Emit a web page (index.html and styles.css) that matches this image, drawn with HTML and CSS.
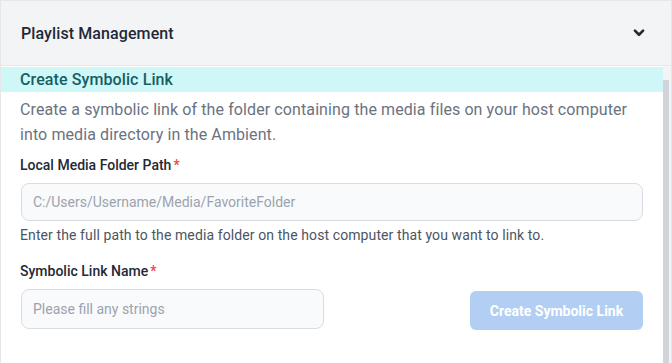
FILE: index.html
```html
<!DOCTYPE html>
<html lang="en">
<head>
    <meta charset="UTF-8">
    <meta name="viewport" content="width=device-width, initial-scale=1.0">
    <title>Playlist Management</title>
    <link rel="stylesheet" href="styles.css">
</head>
<body>

<div class="panel">
    <div class="panel-header">
        <span class="panel-title">Playlist Management</span>
        <svg class="chevron" width="14" height="14" viewBox="0 0 24 24" fill="none" stroke="currentColor" stroke-width="4.5" stroke-linecap="round" stroke-linejoin="round">
            <path d="M5 8l7 7 7-7"/>
        </svg>
    </div>

    <div class="panel-body">
        <div class="panel-content">
            <div class="section-title">Create Symbolic Link</div>
            <div class="section-content">
                <p class="description">Create a symbolic link of the folder containing the media files on your host computer into media directory in the Ambient.</p>

                <div class="field">
                    <label class="field-label">Local Media Folder Path<span class="required">*</span></label>
                    <input class="text-input" type="text" placeholder="C:/Users/Username/Media/FavoriteFolder">
                    <div class="field-help">Enter the full path to the media folder on the host computer that you want to link to.</div>
                </div>

                <div class="field">
                    <label class="field-label">Symbolic Link Name<span class="required">*</span></label>
                    <div class="field-row">
                        <input class="text-input short" type="text" placeholder="Please fill any strings">
                        <button class="btn-create" disabled>Create Symbolic Link</button>
                    </div>
                </div>
            </div>
        </div>
        <!-- scrollbar of the panel body -->
        <div class="scroll-track">
            <div class="scroll-thumb"></div>
        </div>
    </div>
</div>

</body>
</html>
```

FILE: styles.css
```css
body {
    font-family: Roboto, "Liberation Sans", sans-serif;
    background-color: #fff;
    margin: 0;
    padding: 0;
}

.panel {
    height: 363px;
    border: 1px solid #e5e7eb;
    border-bottom: none;
    box-sizing: border-box;
    display: flex;
    flex-direction: column;
}

.panel-header {
    height: 64px;
    flex-shrink: 0;
    display: flex;
    align-items: center;
    justify-content: space-between;
    padding: 0 20px;
    background-color: #f3f4f6;
    border-bottom: 1px solid #e5e7eb;
}

.panel-title {
    font-size: 16px;
    font-weight: 500;
    color: #1f2937;
    letter-spacing: 0.1px;
}

.chevron {
    color: #1f2937;
    margin-right: 5px;
}

.panel-body {
    flex: 1;
    display: flex;
    overflow: hidden;
}

.panel-content {
    flex: 1;
    min-width: 0;
}

.scroll-track {
    width: 8px;
    flex-shrink: 0;
    background-color: #f3f4f6;
    padding-top: 14px;
    box-sizing: border-box;
}

.scroll-thumb {
    width: 6px;
    height: 100%;
    background-color: #d1d5db;
    border-radius: 1px;
}

.section-title {
    background-color: #cff7f7;
    color: #155e63;
    font-size: 16px;
    font-weight: 500;
    padding: 2px 19px;
    line-height: 21px;
    margin-top: 1px;
    letter-spacing: 0.1px;
}

.section-content {
    padding: 5px 20px 40px 19px;
}

.description {
    margin: 0 0 10px;
    font-size: 16px;
    line-height: 25px;
    color: #6b7280;
    letter-spacing: 0.1px;
}

.field {
    margin-bottom: 20px;
}

.field-label {
    display: block;
    font-size: 14px;
    font-weight: 500;
    color: #1f2937;
    margin-bottom: 10px;
}

.required {
    color: #ef4444;
    margin-left: 2px;
}

.text-input {
    display: block;
    width: calc(100% - 1px);
    margin-left: 1px;
    box-sizing: border-box;
    height: 38px;
    padding: 0 11px;
    font-family: inherit;
    font-size: 14px;
    color: #1f2937;
    background-color: #f9fafb;
    border: 1px solid #d9dde3;
    border-radius: 8px;
    outline: none;
}

.text-input::placeholder {
    color: #9ca3af;
}

.text-input.short {
    width: 303px;
    height: 40px;
}

.field-help {
    margin-top: 6px;
    font-size: 14px;
    color: #4b5563;
    letter-spacing: 0.1px;
}

.field-row {
    display: flex;
    justify-content: space-between;
    align-items: flex-start;
}

.btn-create {
    width: 173px;
    height: 39px;
    margin-top: 2px;
    background-color: #b2cff3;
    color: #fff;
    border: none;
    border-radius: 6px;
    font-family: inherit;
    font-size: 14px;
    font-weight: 700;
}
```
